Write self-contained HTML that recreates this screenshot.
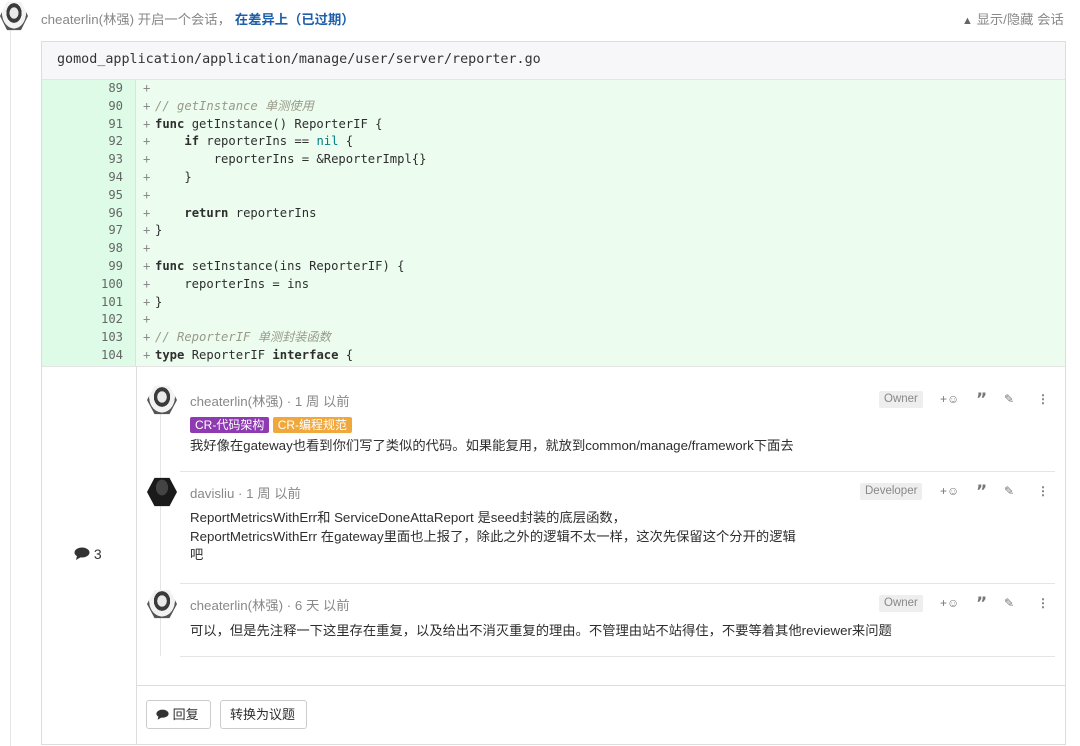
<!DOCTYPE html>
<html><head><meta charset="utf-8">
<style>
*{margin:0;padding:0;box-sizing:border-box}
body{width:1080px;height:746px;background:#fff;position:relative;overflow:hidden;font-family:"Liberation Sans","Noto Sans CJK SC",sans-serif;font-size:13.3px;color:#2e2e2e}
.a{position:absolute}
.hex{position:absolute;width:30px;height:30px;clip-path:polygon(25% 3%,75% 3%,100% 50%,75% 97%,25% 97%,0 50%);background:radial-gradient(ellipse at 50% 40%,#e8e8e8 0 22%,#3a3a3a 23% 38%,#f2f2f2 39% 60%,#555 61%)}
.hex.d{background:radial-gradient(ellipse at 50% 35%,#444 0 28%,#1a1a1a 29%)}
.code{font-family:"DejaVu Sans Mono",monospace;font-size:12.2px}
.row{position:absolute;left:0;height:17.8px;line-height:17.8px;width:1023px}
.ln{position:absolute;left:48px;width:42px;text-align:right;color:#666;padding-right:9px}
.pl{position:absolute;left:101px;color:#8a8a8a}
.tx{position:absolute;left:113px;white-space:pre;color:#2e2e2e}
.k{font-weight:bold}
.c{color:#998;font-style:italic}
.n{color:#008080}
.name{color:#888}
.role{position:absolute;height:17px;line-height:17px;padding:0 5px;background:#eee;color:#888;font-size:11.5px;border-radius:2px}
.ic{position:absolute;color:#777;font-size:12px}
.sep{position:absolute;left:180px;width:875px;height:1px;background:#e5e5e5}
.btn{position:absolute;top:700px;height:29px;border:1px solid #ccc;border-radius:3px;line-height:27px;padding:0 9px;font-size:13px;background:#fff}
</style></head><body>
<div class="a" style="left:10px;top:30px;width:1px;height:716px;background:#e5e5e5"></div>
<div class="hex" style="left:0;top:1px;width:28px;height:30px"></div>
<div class="a" style="left:41px;top:9px;color:#888">cheaterlin(林强) 开启一个会话，<span style="color:#1f5fa8;font-weight:bold;margin-left:4px">在差异上（已过期）</span></div>
<div class="a" style="left:962px;top:9px;color:#888"><span style="font-size:11px;color:#666">&#9650;</span> 显示/隐藏 会话</div>

<div class="a" style="left:41px;top:41px;width:1025px;height:704px;border:1px solid #ddd"></div>
<div class="a" style="left:42px;top:42px;width:1023px;height:38px;background:#f7f7f9;border-bottom:1px solid #e5e5e5"></div>
<div class="a code" style="left:57px;top:52px;font-size:13.4px;color:#333">gomod_application/application/manage/user/server/reporter.go</div>

<div class="a code" style="left:42px;top:80px;width:1023px;height:286px;background:#ecfdf0">
<div class="a" style="left:0;top:0;width:94px;height:286px;background:#ddfbe6;border-right:1px solid #c7f0d2"></div>
<div class="row" style="top:0"><span class="ln">89</span><span class="pl">+</span></div>
<div class="row" style="top:17.8px"><span class="ln">90</span><span class="pl">+</span><span class="tx c">// getInstance 单测使用</span></div>
<div class="row" style="top:35.6px"><span class="ln">91</span><span class="pl">+</span><span class="tx"><span class="k">func</span> getInstance() ReporterIF {</span></div>
<div class="row" style="top:53.4px"><span class="ln">92</span><span class="pl">+</span><span class="tx">    <span class="k">if</span> reporterIns == <span class="n">nil</span> {</span></div>
<div class="row" style="top:71.2px"><span class="ln">93</span><span class="pl">+</span><span class="tx">        reporterIns = &amp;ReporterImpl{}</span></div>
<div class="row" style="top:89px"><span class="ln">94</span><span class="pl">+</span><span class="tx">    }</span></div>
<div class="row" style="top:106.8px"><span class="ln">95</span><span class="pl">+</span></div>
<div class="row" style="top:124.6px"><span class="ln">96</span><span class="pl">+</span><span class="tx">    <span class="k">return</span> reporterIns</span></div>
<div class="row" style="top:142.4px"><span class="ln">97</span><span class="pl">+</span><span class="tx">}</span></div>
<div class="row" style="top:160.2px"><span class="ln">98</span><span class="pl">+</span></div>
<div class="row" style="top:178px"><span class="ln">99</span><span class="pl">+</span><span class="tx"><span class="k">func</span> setInstance(ins ReporterIF) {</span></div>
<div class="row" style="top:195.8px"><span class="ln">100</span><span class="pl">+</span><span class="tx">    reporterIns = ins</span></div>
<div class="row" style="top:213.6px"><span class="ln">101</span><span class="pl">+</span><span class="tx">}</span></div>
<div class="row" style="top:231.4px"><span class="ln">102</span><span class="pl">+</span></div>
<div class="row" style="top:249.2px"><span class="ln">103</span><span class="pl">+</span><span class="tx c">// ReporterIF 单测封装函数</span></div>
<div class="row" style="top:267px"><span class="ln">104</span><span class="pl">+</span><span class="tx"><span class="k">type</span> ReporterIF <span class="k">interface</span> {</span></div>
</div>
<div class="a" style="left:42px;top:366px;width:1023px;height:1px;background:#e5e5e5"></div>
<div class="a" style="left:136px;top:366px;width:1px;height:378px;background:#ddd"></div>
<div class="a" style="left:74px;top:546px;font-size:14px;color:#333"><svg width="16" height="13" viewBox="0 0 16 13" style="vertical-align:-1px"><ellipse cx="8" cy="5.5" rx="7.5" ry="5" fill="#333"/><path d="M3 9 L2 13 L7 10 Z" fill="#333"/></svg> 3</div>

<div class="a" style="left:160px;top:414px;width:1px;height:242px;background:#e5e5e5"></div>

<div class="hex" style="left:147px;top:385px"></div>
<div class="a name" style="left:190px;top:391px">cheaterlin(林强) · 1 周 以前</div>
<div class="a" style="left:190px;top:417px;height:16px;line-height:16px;font-size:12px;color:#fff"><span style="background:#8e3ab0;padding:1px 5px;border-radius:2px">CR-代码架构</span> <span style="background:#f0a83c;padding:1px 5px;border-radius:2px">CR-编程规范</span></div>
<div class="a" style="left:190px;top:435px">我好像在gateway也看到你们写了类似的代码。如果能复用，就放到common/manage/framework下面去</div>
<div class="role" style="left:879px;top:391px">Owner</div>
<div class="sep" style="top:471px"></div>

<div class="hex d" style="left:147px;top:477px"></div>
<div class="a name" style="left:190px;top:483px">davisliu · 1 周 以前</div>
<div class="a" style="left:190px;top:509px;line-height:18.5px">ReportMetricsWithErr和 ServiceDoneAttaReport 是seed封装的底层函数，<br>ReportMetricsWithErr 在gateway里面也上报了，除此之外的逻辑不太一样，这次先保留这个分开的逻辑<br>吧</div>
<div class="role" style="left:860px;top:483px">Developer</div>
<div class="sep" style="top:583px"></div>

<div class="hex" style="left:147px;top:589px"></div>
<div class="a name" style="left:190px;top:595px">cheaterlin(林强) · 6 天 以前</div>
<div class="a" style="left:190px;top:620px">可以，但是先注释一下这里存在重复，以及给出不消灭重复的理由。不管理由站不站得住，不要等着其他reviewer来问题</div>
<div class="role" style="left:879px;top:595px">Owner</div>
<div class="sep" style="top:656px"></div>

<div class="ic" style="left:940px;top:392px">+☺</div><div class="ic" style="left:976px;top:390px;font-weight:bold;font-size:17px;font-family:'DejaVu Sans'">”</div><div class="ic" style="left:1004px;top:392px">✎</div><div class="ic" style="left:1037px;top:392px;font-weight:bold">⋮</div>
<div class="ic" style="left:940px;top:484px">+☺</div><div class="ic" style="left:976px;top:482px;font-weight:bold;font-size:17px;font-family:'DejaVu Sans'">”</div><div class="ic" style="left:1004px;top:484px">✎</div><div class="ic" style="left:1037px;top:484px;font-weight:bold">⋮</div>
<div class="ic" style="left:940px;top:596px">+☺</div><div class="ic" style="left:976px;top:594px;font-weight:bold;font-size:17px;font-family:'DejaVu Sans'">”</div><div class="ic" style="left:1004px;top:596px">✎</div><div class="ic" style="left:1037px;top:596px;font-weight:bold">⋮</div>

<div class="a" style="left:137px;top:685px;width:928px;height:1px;background:#ddd"></div>
<div class="btn" style="left:146px;width:65px"><svg width="13" height="11" viewBox="0 0 16 13" style="vertical-align:-1px"><ellipse cx="8" cy="5.5" rx="7.5" ry="5" fill="#333"/><path d="M3 9 L2 13 L7 10 Z" fill="#333"/></svg> 回复</div>
<div class="btn" style="left:220px;width:87px">转换为议题</div>
</body></html>
